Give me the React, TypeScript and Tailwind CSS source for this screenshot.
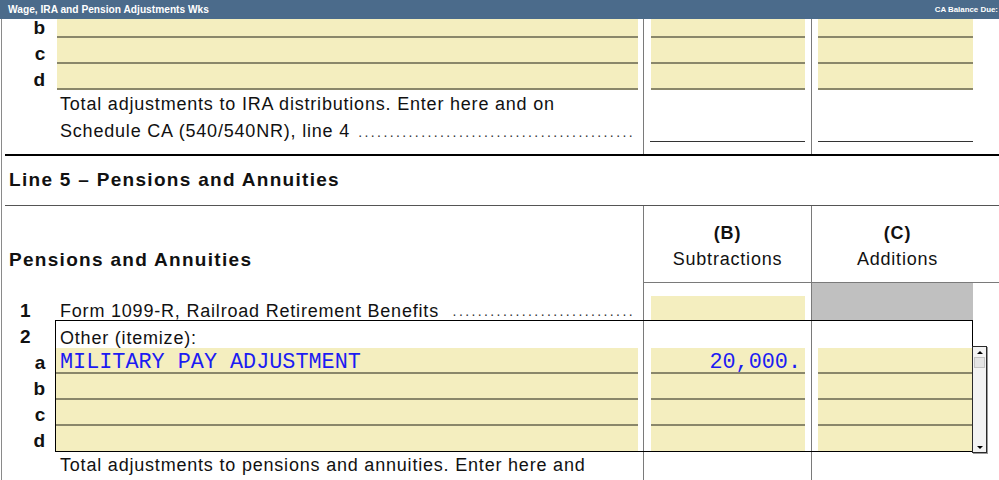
import React from 'react';

const YELLOW = 'bg-[#f4eebf]';

const Dots: React.FC<{ count: number }> = ({ count }) => (
  <span className="ml-auto whitespace-nowrap text-[14px] tracking-[2.4px] text-[#333]">
    {'.'.repeat(count)}
  </span>
);

// one yellow entry row (IRA lines b, c, d)
const EntryRow: React.FC<{ label: string }> = ({ label }) => (
  <div className="flex h-[26px]">
    <div className="w-[641px] flex">
      <div className="w-[55px] flex items-end justify-end pr-[11px] font-bold text-[19px] leading-[20px]">{label}</div>
      <div className={`w-[581px] ${YELLOW} border-b-2 border-[#8a876a]`} />
    </div>
    <div className="w-[168px] border-l border-[#7a7a7a] pl-[7px]">
      <div className={`w-[154px] h-full ${YELLOW} border-b-2 border-[#8a876a]`} />
    </div>
    <div className="flex-1 border-l border-[#7a7a7a] pl-[6px]">
      <div className={`w-[155px] h-full ${YELLOW} border-b-2 border-[#8a876a]`} />
    </div>
  </div>
);

// rows inside the itemize box
const BoxRow: React.FC<{ text?: string; amount?: string; last?: boolean }> = ({ text, amount, last }) => {
  const line = last ? 'h-[25px]' : 'h-[26px] border-b-2 border-[#8a876a]';
  const mono = "font-['Liberation_Mono','Courier_New',monospace] text-[21.8px] leading-[19px] tracking-normal text-[#1c1cf2]";
  return (
    <div className="flex">
      <div className="w-[587px]">
        <div className={`w-[582px] ${YELLOW} ${line} flex items-end pl-[4px] ${mono}`}>{text}</div>
      </div>
      <div className="w-[168px] border-l border-[#7a7a7a] pl-[7px]">
        <div className={`w-[154px] ${YELLOW} ${line} flex items-end justify-end pr-[4px] ${mono}`}>{amount}</div>
      </div>
      <div className="w-[161px] border-l border-[#7a7a7a] pl-[6px]">
        <div className={`w-[154px] ${YELLOW} ${line}`} />
      </div>
    </div>
  );
};

const Scrollbar: React.FC = () => (
  <div className="absolute top-[25px] left-full w-[15px] h-[107px] border border-[#2a2a2a] bg-[#f3f3f3] shadow-[1px_1px_0_#9a9a9a] flex flex-col">
    <div className="h-[10px] flex items-center justify-center">
      <div className="w-0 h-0 border-x-[3px] border-x-transparent border-b-[3px] border-b-black" />
    </div>
    <div className="h-[11px] mx-px border border-[#c4c4c4] bg-[#e4e4e4]" />
    <div className="flex-1" />
    <div className="h-[10px] flex items-center justify-center">
      <div className="w-0 h-0 border-x-[3px] border-x-transparent border-t-[3px] border-t-black" />
    </div>
  </div>
);

export default function App() {
  return (
    <div className="w-[999px] h-[480px] overflow-hidden bg-white text-[#111] font-['Liberation_Sans',Arial,sans-serif]">
      {/* title bar */}
      <div className="relative z-10 h-[19px] bg-[#4b6b8b] flex items-center justify-between pl-[8px] pr-px text-white font-bold">
        <span className="text-[10.2px]">Wage, IRA and Pension Adjustments Wks</span>
        <span className="text-[7.9px]">CA Balance Due:</span>
      </div>

      <div className="-mt-[7px] ml-px border-l border-[#8a8a8a] text-[18px] tracking-[0.8px]">
        <EntryRow label="b" />
        <EntryRow label="c" />
        <EntryRow label="d" />

        {/* IRA total */}
        <div className="flex h-[64px]">
          <div className="w-[641px] pl-[58px] pr-[8px] pt-px leading-[27px]">
            <div>Total adjustments to IRA distributions. Enter here and on</div>
            <div className="flex items-baseline">
              <span>Schedule CA (540/540NR), line 4</span>
              <Dots count={44} />
            </div>
          </div>
          <div className="w-[168px] border-l border-[#7a7a7a] pl-[6px]">
            <div className="w-[155px] h-[52px] border-b border-[#333]" />
          </div>
          <div className="flex-1 border-l border-[#7a7a7a] pl-[6px]">
            <div className="w-[155px] h-[52px] border-b border-[#333]" />
          </div>
        </div>

        <div className="ml-[3px] h-[2px] bg-black" />

        {/* section heading */}
        <div className="h-[49px] flex items-center pl-[7px] font-bold text-[19px] tracking-[1.3px]">
          Line 5 – Pensions and Annuities
        </div>
        <div className="ml-[3px] h-px bg-[#555]" />

        {/* column heads */}
        <div className="flex h-[77px] leading-[26px]">
          <div className="w-[641px] flex items-end pl-[7px] pb-[10px] font-bold text-[19px] tracking-[1.3px]">
            Pensions and Annuities
          </div>
          <div className="w-[168px] border-l border-b border-[#7a7a7a] flex flex-col items-center justify-end pb-[10px]">
            <span className="font-bold">(B)</span>
            <span>Subtractions</span>
          </div>
          <div className="flex-1 border-l border-b border-[#7a7a7a] flex flex-col items-center justify-end pb-[10px] pr-[16px]">
            <span className="font-bold">(C)</span>
            <span>Additions</span>
          </div>
        </div>

        {/* line 1 */}
        <div className="flex h-[37px]">
          <div className="w-[641px] flex items-end leading-[18px] pr-[8px]">
            <span className="w-[58px] pl-[18px] font-bold text-[19px]">1</span>
            <span>Form 1099-R, Railroad Retirement Benefits</span>
            <Dots count={29} />
          </div>
          <div className="w-[168px] border-l border-[#7a7a7a] pl-[7px] flex items-end">
            <div className={`w-[154px] h-[24px] ${YELLOW}`} />
          </div>
          <div className="flex-1 border-l border-[#7a7a7a]">
            <div className="w-[161px] h-full bg-[#c0c0c0]" />
          </div>
        </div>

        {/* line 2 itemize box */}
        <div className="flex">
          <div className="w-[53px] flex flex-col font-bold text-[19px] leading-[20px]">
            <div className="h-[27px] flex items-end pl-[18px]">2</div>
            <div className="h-[26px] flex items-end justify-end pr-[9px]">a</div>
            <div className="h-[26px] flex items-end justify-end pr-[9px]">b</div>
            <div className="h-[26px] flex items-end justify-end pr-[9px]">c</div>
            <div className="h-[26px] flex items-end justify-end pr-[9px]">d</div>
          </div>
          <div className="relative border border-black">
            <div className="flex h-[27px]">
              <div className="w-[587px] flex items-end pl-[4px] leading-[20px]">Other (itemize):</div>
              <div className="w-[168px] border-l border-[#7a7a7a]" />
              <div className="w-[161px] border-l border-[#7a7a7a]" />
            </div>
            <BoxRow text="MILITARY PAY ADJUSTMENT" amount="20,000." />
            <BoxRow />
            <BoxRow />
            <BoxRow last />
            <Scrollbar />
          </div>
        </div>

        {/* pensions total */}
        <div className="flex h-[40px]">
          <div className="w-[641px] pl-[58px] leading-[27px]">
            Total adjustments to pensions and annuities. Enter here and
          </div>
          <div className="w-[168px] border-l border-[#7a7a7a]" />
          <div className="flex-1 border-l border-[#7a7a7a]" />
        </div>
      </div>
    </div>
  );
}
